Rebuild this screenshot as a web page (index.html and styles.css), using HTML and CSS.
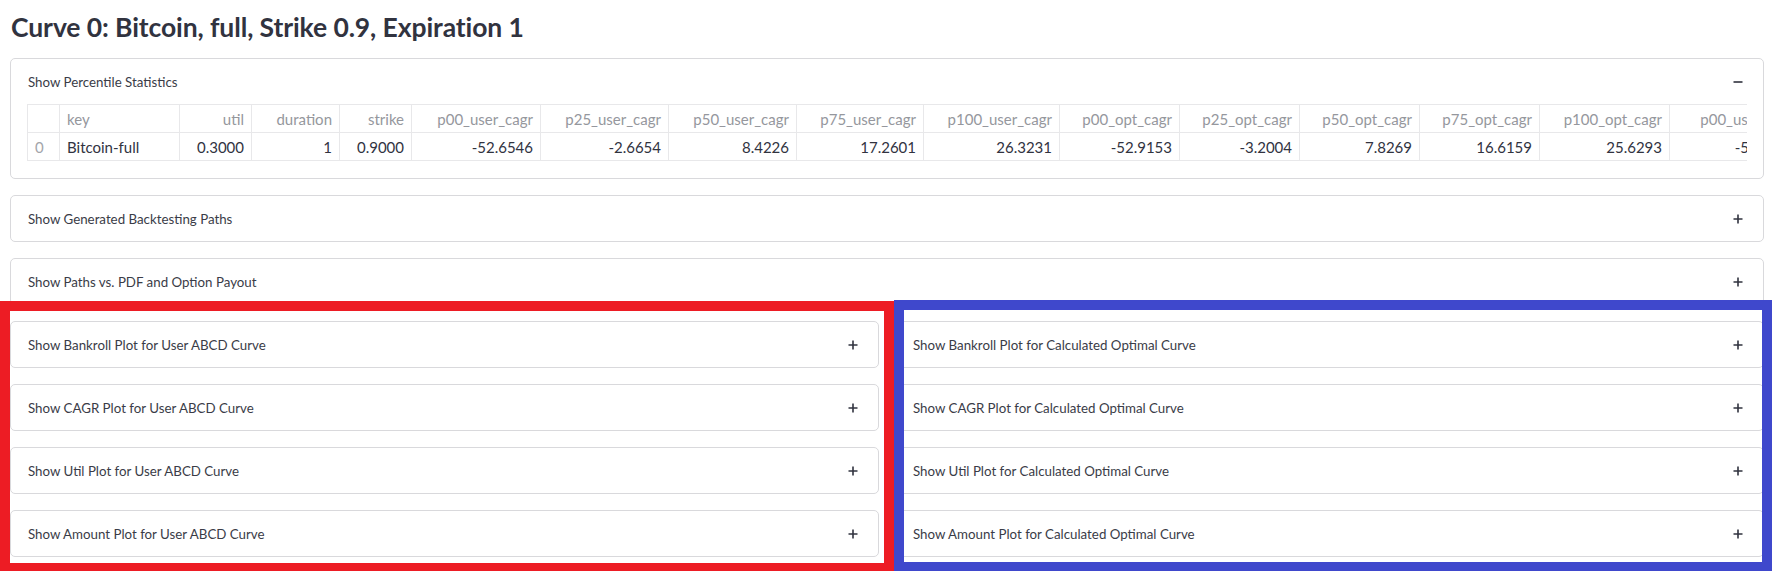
FILE: index.html
```html
<!DOCTYPE html>
<html lang="en">
<head>
<meta charset="utf-8">
<title>Curve 0</title>
<link rel="stylesheet" href="styles.css">
</head>
<body>
<main class="main">
  <h3 class="title">Curve 0: Bitcoin, full, Strike 0.9, Expiration 1</h3>
  <div class="stack">
    <section class="exp">
      <div class="exp-head">
        <span class="exp-label">Show Percentile Statistics</span>
        <svg class="ico" viewBox="0 0 10 10" width="10" height="10"><rect x="0.5" y="4.2" width="9" height="1.6" fill="#31333f"/></svg>
      </div>
      <div class="exp-body">
        <div class="grid-wrap">
          <table class="grid">
            <colgroup>
              <col class="c32"><col class="c120"><col class="c72"><col class="c88"><col class="c72">
              <col class="c129"><col class="c128"><col class="c128"><col class="c127"><col class="c136">
              <col class="c120"><col class="c120"><col class="c120"><col class="c120"><col class="c130"><col class="c134">
            </colgroup>
            <thead>
              <tr>
                <th class="idx"></th><th class="txt">key</th><th>util</th><th>duration</th><th>strike</th>
                <th>p00_user_cagr</th><th>p25_user_cagr</th><th>p50_user_cagr</th><th>p75_user_cagr</th><th>p100_user_cagr</th>
                <th>p00_opt_cagr</th><th>p25_opt_cagr</th><th>p50_opt_cagr</th><th>p75_opt_cagr</th><th>p100_opt_cagr</th><th>p00_user_cagr</th>
              </tr>
            </thead>
            <tbody>
              <tr>
                <td class="idx">0</td><td class="txt">Bitcoin-full</td><td>0.3000</td><td>1</td><td>0.9000</td>
                <td>-52.6546</td><td>-2.6654</td><td>8.4226</td><td>17.2601</td><td>26.3231</td>
                <td>-52.9153</td><td>-3.2004</td><td>7.8269</td><td>16.6159</td><td>25.6293</td><td>-52.6546</td>
              </tr>
            </tbody>
          </table>
        </div>
      </div>
    </section>

    <section class="exp">
      <div class="exp-head"><span class="exp-label">Show Generated Backtesting Paths</span><svg class="ico" viewBox="0 0 10 10" width="10" height="10"><path d="M4.2 0.5h1.6v3.7h3.7v1.6H5.8v3.7H4.2V5.8H0.5V4.2h3.7z" fill="#31333f"/></svg></div>
    </section>

    <section class="exp">
      <div class="exp-head"><span class="exp-label">Show Paths vs. PDF and Option Payout</span><svg class="ico" viewBox="0 0 10 10" width="10" height="10"><path d="M4.2 0.5h1.6v3.7h3.7v1.6H5.8v3.7H4.2V5.8H0.5V4.2h3.7z" fill="#31333f"/></svg></div>
    </section>

    <div class="cols">
      <div class="col">
        <section class="exp"><div class="exp-head"><span class="exp-label">Show Bankroll Plot for User ABCD Curve</span><svg class="ico" viewBox="0 0 10 10" width="10" height="10"><path d="M4.2 0.5h1.6v3.7h3.7v1.6H5.8v3.7H4.2V5.8H0.5V4.2h3.7z" fill="#31333f"/></svg></div></section>
        <section class="exp"><div class="exp-head"><span class="exp-label">Show CAGR Plot for User ABCD Curve</span><svg class="ico" viewBox="0 0 10 10" width="10" height="10"><path d="M4.2 0.5h1.6v3.7h3.7v1.6H5.8v3.7H4.2V5.8H0.5V4.2h3.7z" fill="#31333f"/></svg></div></section>
        <section class="exp"><div class="exp-head"><span class="exp-label">Show Util Plot for User ABCD Curve</span><svg class="ico" viewBox="0 0 10 10" width="10" height="10"><path d="M4.2 0.5h1.6v3.7h3.7v1.6H5.8v3.7H4.2V5.8H0.5V4.2h3.7z" fill="#31333f"/></svg></div></section>
        <section class="exp"><div class="exp-head"><span class="exp-label">Show Amount Plot for User ABCD Curve</span><svg class="ico" viewBox="0 0 10 10" width="10" height="10"><path d="M4.2 0.5h1.6v3.7h3.7v1.6H5.8v3.7H4.2V5.8H0.5V4.2h3.7z" fill="#31333f"/></svg></div></section>
      </div>
      <div class="col">
        <section class="exp"><div class="exp-head"><span class="exp-label">Show Bankroll Plot for Calculated Optimal Curve</span><svg class="ico" viewBox="0 0 10 10" width="10" height="10"><path d="M4.2 0.5h1.6v3.7h3.7v1.6H5.8v3.7H4.2V5.8H0.5V4.2h3.7z" fill="#31333f"/></svg></div></section>
        <section class="exp"><div class="exp-head"><span class="exp-label">Show CAGR Plot for Calculated Optimal Curve</span><svg class="ico" viewBox="0 0 10 10" width="10" height="10"><path d="M4.2 0.5h1.6v3.7h3.7v1.6H5.8v3.7H4.2V5.8H0.5V4.2h3.7z" fill="#31333f"/></svg></div></section>
        <section class="exp"><div class="exp-head"><span class="exp-label">Show Util Plot for Calculated Optimal Curve</span><svg class="ico" viewBox="0 0 10 10" width="10" height="10"><path d="M4.2 0.5h1.6v3.7h3.7v1.6H5.8v3.7H4.2V5.8H0.5V4.2h3.7z" fill="#31333f"/></svg></div></section>
        <section class="exp"><div class="exp-head"><span class="exp-label">Show Amount Plot for Calculated Optimal Curve</span><svg class="ico" viewBox="0 0 10 10" width="10" height="10"><path d="M4.2 0.5h1.6v3.7h3.7v1.6H5.8v3.7H4.2V5.8H0.5V4.2h3.7z" fill="#31333f"/></svg></div></section>
      </div>
    </div>
  </div>
</main>
<div class="anno anno-red"></div>
<div class="anno anno-blue"></div>
</body>
</html>
```

FILE: styles.css
```css
html, body {
  margin: 0;
  padding: 0;
  overflow: hidden;
  background: #ffffff;
}
body {
  font-family: Lato, "Liberation Sans", sans-serif;
  color: #31333f;
  width: 1776px;
  height: 571px;
  position: relative;
}
.main {
  padding: 7px 12px 0 10px;
}
.title {
  margin: 0 0 11px 1px;
  font-size: 26.5px;
  line-height: 40px;
  font-weight: 700;
  color: #31333f;
  letter-spacing: -0.1px;
}
.stack {
  display: flex;
  flex-direction: column;
  gap: 16px;
}
.exp {
  border: 1px solid #d9d9dc;
  border-radius: 5px;
  background: #fff;
}
.exp-head {
  height: 45px;
  display: flex;
  align-items: center;
  justify-content: space-between;
  padding: 0 20px 0 17px;
}
.exp-label {
  font-size: 13.3px;
  color: #3a3c47;
}
.ico {
  display: block;
  flex: none;
}
.exp-body {
  padding: 0 16px 17px 16px;
}
.grid-wrap {
  overflow: hidden;
}
.grid {
  border-collapse: collapse;
  table-layout: fixed;
  width: 1776px;
  font-size: 15px;
}
.c32 { width: 32px; }
.c72 { width: 72px; }
.c88 { width: 88px; }
.c120 { width: 120px; }
.c127 { width: 127px; }
.c128 { width: 128px; }
.c129 { width: 129px; }
.c130 { width: 130px; }
.c134 { width: 134px; }
.c136 { width: 136px; }
.grid th, .grid td {
  border: 1px solid #e8e8ea;
  height: 27px;
  padding: 0 7px;
  text-align: right;
  white-space: nowrap;
  overflow: hidden;
  font-weight: 400;
}
.grid th {
  color: #95979d;
}
.grid td {
  color: #31333f;
}
.grid .txt {
  text-align: left;
}
.grid .idx {
  text-align: left;
  color: #a3a5aa;
}
.cols {
  display: grid;
  grid-template-columns: 1fr 1fr;
  gap: 16px;
}
.col {
  display: flex;
  flex-direction: column;
  gap: 16px;
}
.anno {
  position: absolute;
  box-sizing: border-box;
  border: 10px solid;
  pointer-events: none;
}
.anno-red {
  left: 0;
  top: 301px;
  width: 894px;
  height: 272px;
  border-color: #ed1c24;
}
.anno-blue {
  left: 894px;
  top: 300px;
  width: 878px;
  height: 272px;
  border-color: #3f48cc;
}
```
